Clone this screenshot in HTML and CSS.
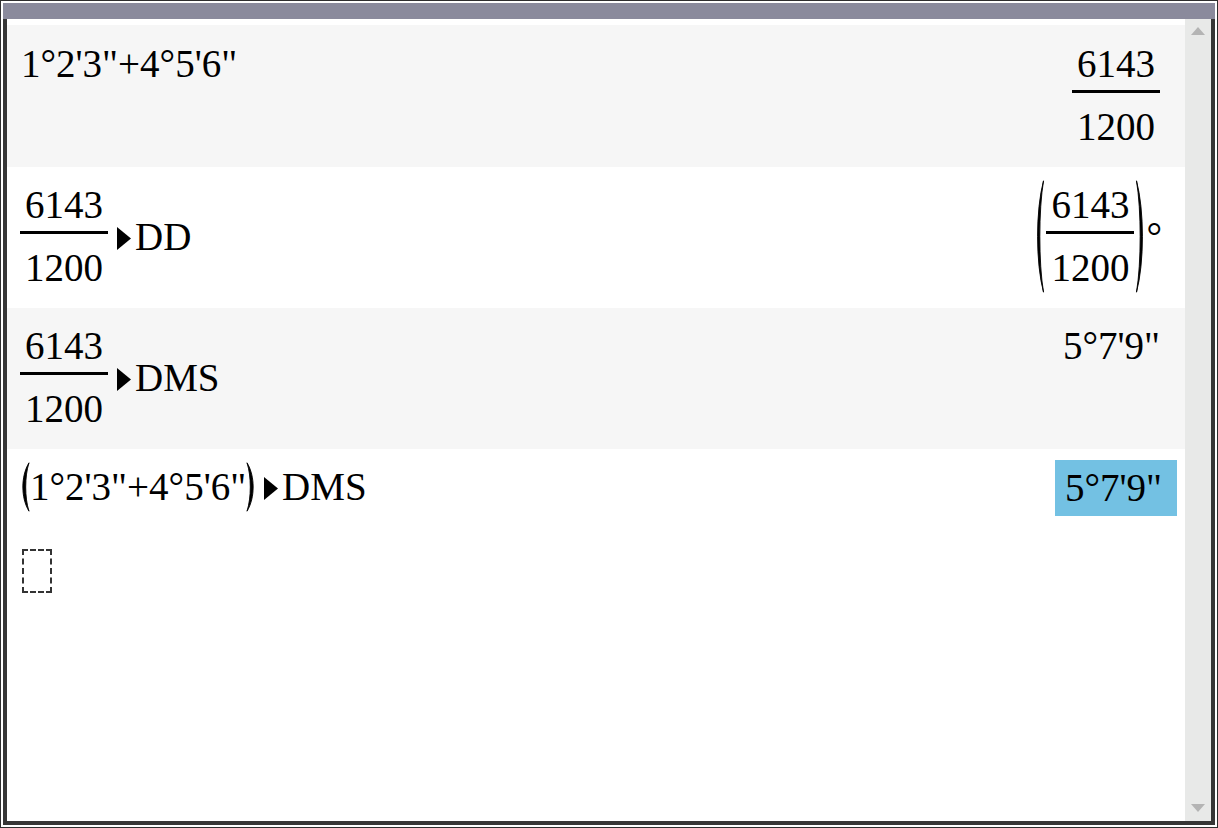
FILE: index.html
```html
<!DOCTYPE html>
<html>
<head>
<meta charset="utf-8">
<link rel="stylesheet" href="styles.css">
</head>
<body>
<div class="frame">
  <div class="titlebar"></div>
  <div class="main">
    <div class="history">
      <div class="row shaded first">
        <div class="line">1°2&#39;3&quot;+4°5&#39;6&quot;</div>
        <div class="frac"><span class="num">6143</span><span class="bar"></span><span class="den">1200</span></div>
      </div>
      <div class="row">
        <div class="expr">
          <div class="frac"><span class="num">6143</span><span class="bar"></span><span class="den">1200</span></div>
          <span class="line"><svg class="tri" viewBox="0 0 14 23"><polygon points="0,0 14,11.5 0,23"/></svg>DD</span>
        </div>
        <div class="paren-group">
          <svg class="paren big" viewBox="0 0 10 113"><path d="M9.5 0.8 C1.6 30 1.6 83 9.5 112.2 C4.6 83 4.6 30 9.5 0.8 Z"/></svg>
          <div class="frac"><span class="num">6143</span><span class="bar"></span><span class="den">1200</span></div>
          <svg class="paren big" viewBox="0 0 10 113"><path d="M0.5 0.8 C8.4 30 8.4 83 0.5 112.2 C5.4 83 5.4 30 0.5 0.8 Z"/></svg>
          <span class="line deg">°</span>
        </div>
      </div>
      <div class="row shaded">
        <div class="expr">
          <div class="frac"><span class="num">6143</span><span class="bar"></span><span class="den">1200</span></div>
          <span class="line"><svg class="tri" viewBox="0 0 14 23"><polygon points="0,0 14,11.5 0,23"/></svg>DMS</span>
        </div>
        <div class="line">5°7&#39;9&quot;</div>
      </div>
      <div class="row last">
        <div class="expr">
          <svg class="paren small" viewBox="0 0 10 50"><path d="M9 0.8 C0.8 14 0.8 36 9 49.2 C4.6 36 4.6 14 9 0.8 Z"/></svg>
          <span class="line">1°2&#39;3&quot;+4°5&#39;6&quot;</span>
          <svg class="paren small" viewBox="0 0 10 50"><path d="M1 0.8 C9.2 14 9.2 36 1 49.2 C5.4 36 5.4 14 1 0.8 Z"/></svg>
          <span class="line"><svg class="tri" viewBox="0 0 14 23"><polygon points="0,0 14,11.5 0,23"/></svg>DMS</span>
        </div>
        <div class="line selected">5°7&#39;9&quot;</div>
      </div>
      <div class="entry">
        <span class="cursor-box"></span>
      </div>
    </div>
    <div class="scrollbar">
      <span class="arrow up"></span>
      <span class="arrow down"></span>
    </div>
  </div>
</div>
</body>
</html>
```

FILE: styles.css
```css
* { box-sizing: border-box; }

html, body {
  margin: 0;
  padding: 0;
  background: #ffffff;
}

.frame {
  width: 1218px;
  height: 828px;
  border: 1px solid #2e2e2e;
  padding: 2px;
  display: flex;
  flex-direction: column;
  background: #ffffff;
}

.titlebar {
  height: 16px;
  background: #8a8a9c;
  flex: none;
}

.main {
  flex: 1;
  display: flex;
  border: 4px solid #363636;
  border-top: none;
  min-height: 0;
}

.history {
  flex: 1;
  display: flex;
  flex-direction: column;
  padding-top: 6px;
  font-family: "Liberation Serif", "Times New Roman", serif;
  font-size: 39px;
  color: #000;
  overflow: hidden;
}

.row {
  display: flex;
  justify-content: space-between;
  align-items: flex-start;
  padding: 16px 25px 18px 13px;
  flex: none;
}

.row.first {
  padding-top: 17px;
}

.row.shaded {
  background: #f6f6f6;
}

.line {
  line-height: 44px;
  white-space: nowrap;
}

.first > .line {
  padding-left: 1px;
}

.frac {
  display: inline-flex;
  flex-direction: column;
  text-align: center;
  flex: none;
}

.num, .den {
  line-height: 44px;
  padding: 0 5px;
}

.bar {
  height: 3px;
  background: #000;
  margin: 4px 0 12px;
}

.expr {
  display: flex;
  align-items: center;
}

.tri {
  width: 14px;
  height: 23px;
  margin: 0 4px 0 9px;
  vertical-align: baseline;
  fill: #000;
}

.paren-group {
  display: flex;
  align-items: center;
  margin: -3px -2px -3px 0;
}

.paren {
  display: block;
  width: 10px;
  flex: none;
  overflow: visible;
}

.paren path {
  fill: #000;
  stroke: #000;
  stroke-width: 0.9;
  stroke-linejoin: round;
}

.paren.big {
  height: 113px;
}

.paren.small {
  height: 50px;
}

.paren-group .frac {
  margin: 0 2px;
}

.row.last {
  padding-top: 12px;
  padding-bottom: 18px;
}

.row.last .expr {
  padding-top: 1px;
}

.row.last .tri {
  margin-left: 8px;
}

.selected {
  background: #73c1e3;
  padding: 6px 15px 6px 10px;
  margin: -1px -17px 0 0;
}

.entry {
  padding: 15px 0 0 15px;
}

.cursor-box {
  display: block;
  width: 30px;
  height: 44px;
  border: 2px dashed #333;
}

.scrollbar {
  width: 26px;
  flex: none;
  background: #e8e9e8;
  display: flex;
  flex-direction: column;
  justify-content: space-between;
  align-items: center;
  padding: 8px 0 9px;
}

.arrow {
  display: block;
  width: 0;
  height: 0;
  border-left: 7px solid transparent;
  border-right: 7px solid transparent;
}

.arrow.up {
  border-bottom: 8px solid #b4b4b4;
}

.arrow.down {
  border-top: 8px solid #b4b4b4;
}
```
